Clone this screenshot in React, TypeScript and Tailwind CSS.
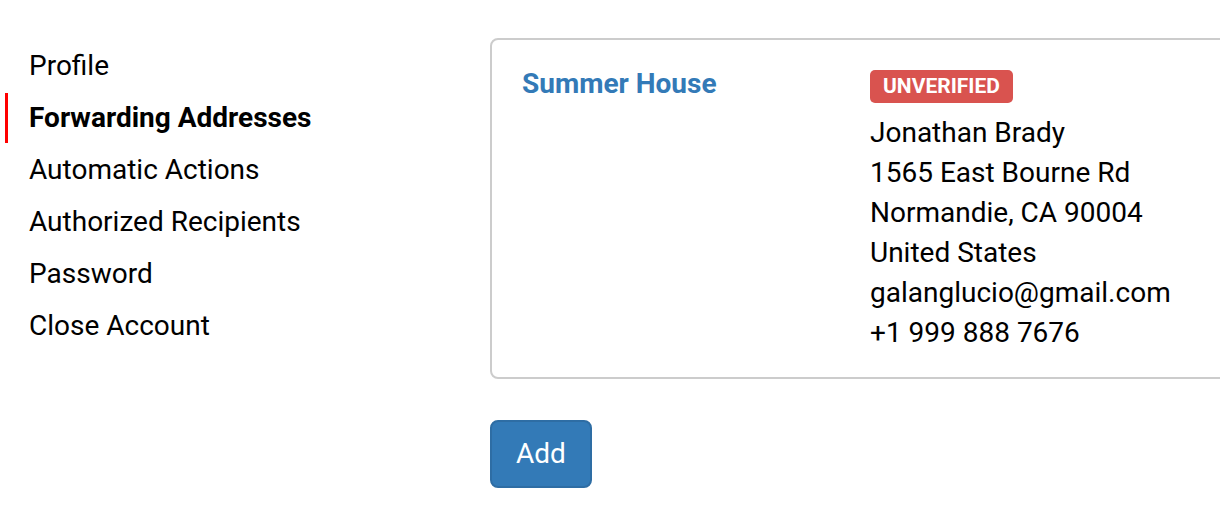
import React from "react";

const navItems = [
  "Profile",
  "Forwarding Addresses",
  "Automatic Actions",
  "Authorized Recipients",
  "Password",
  "Close Account",
];

const addressLines = [
  "Jonathan Brady",
  "1565 East Bourne Rd",
  "Normandie, CA 90004",
  "United States",
  "galanglucio@gmail.com",
  "+1 999 888 7676",
];

const App: React.FC = () => {
  const active = "Forwarding Addresses";

  return (
    <div className="h-[518px] w-[1220px] overflow-hidden bg-white font-['Roboto',sans-serif] text-[28px] leading-[40px] text-black">
      <div className="flex pt-[38px]">
        <nav className="w-[490px] shrink-0 pt-[2px]">
          {navItems.map((item) => (
            <div key={item} className="flex h-[52px] items-center">
              <div
                className={`ml-[5px] h-[50px] w-[3px] ${
                  item === active ? "bg-[#ff0000]" : ""
                }`}
              />
              <span
                className={`pl-[21px] ${item === active ? "font-bold" : ""}`}
              >
                {item}
              </span>
            </div>
          ))}
        </nav>

        <main className="flex-1 min-w-0">
          <div className="w-[760px] rounded-[8px] border-2 border-[#cccccc] px-[30px] pt-[24px] pb-[24px]">
            <div className="flex">
              <div className="w-[348px] shrink-0 font-bold text-[#337ab7]">
                Summer House
              </div>
              <div>
                <div className="mt-[6px] mb-[10px] flex h-[33px] items-start">
                  <span className="rounded-[5px] bg-[#d9534f] px-[13px] pt-[5px] pb-[6px] text-[21px] font-bold leading-[22px] text-white">
                    UNVERIFIED
                  </span>
                </div>
                {addressLines.map((line) => (
                  <div key={line}>{line}</div>
                ))}
              </div>
            </div>
          </div>

          <button className="mt-[41px] rounded-[8px] border-2 border-[#2e6da4] bg-[#337ab7] px-[24px] py-[12px] text-[28px] leading-[40px] text-white">
            Add
          </button>
        </main>
      </div>
    </div>
  );
};

export default App;
